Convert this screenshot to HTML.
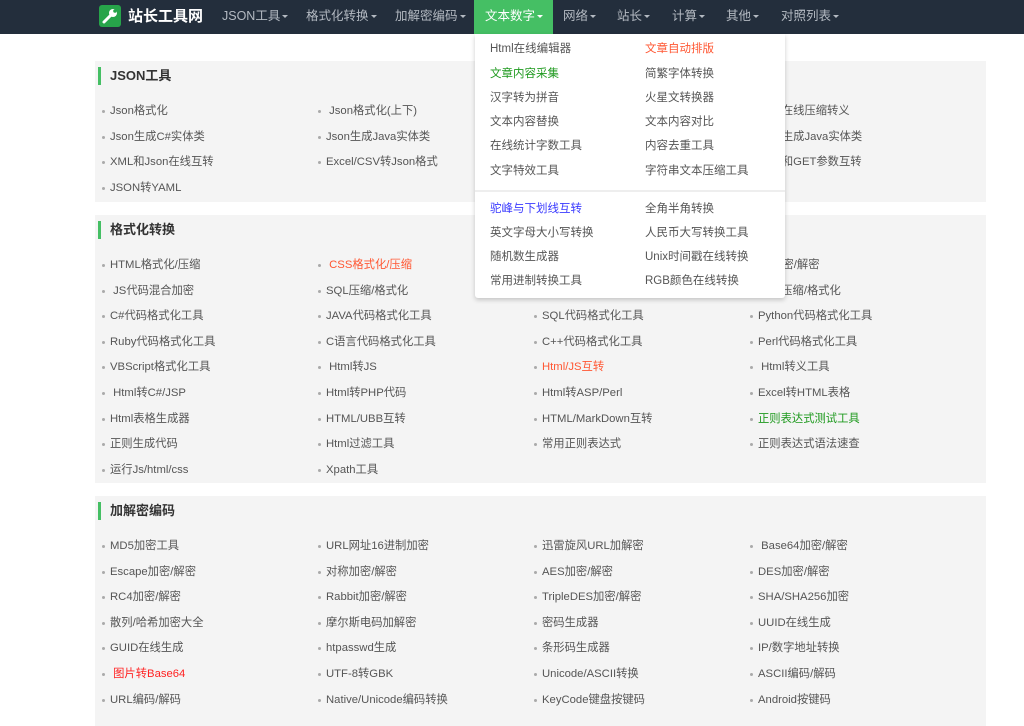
<!DOCTYPE html>
<html><head><meta charset="utf-8"><style>
*{margin:0;padding:0;box-sizing:border-box}
body{width:1024px;height:718px;overflow:hidden;background:#fff;font-family:"Liberation Sans","Noto Sans CJK SC",sans-serif;color:#555;position:relative}
.nav{position:absolute;left:0;top:0;width:1024px;height:34px;background:#232e3c}
.nav span{position:absolute;top:0;line-height:33px;font-size:12.5px;color:#b4bac2}
.caret{display:inline-block;width:0;height:0;border-left:3px solid transparent;border-right:3px solid transparent;border-top:3px solid currentColor;vertical-align:middle;margin-left:2px}
.logo{position:absolute;left:99px;top:5px;width:22px;height:22px;background:#27a44a;border-radius:3px}
.brand{position:absolute;left:128px;top:0;line-height:33px;font-size:15px;font-weight:bold;color:#fff}
.active{position:absolute;left:474px;top:0;width:79px;height:34px;background:#45bf64}
.box{position:absolute;left:95px;width:891px;background:#f4f4f4}
.box h3{position:absolute;left:3px;top:6px;height:18px;border-left:3px solid #45bf64;padding-left:9px;font-size:13px;line-height:18px;color:#333}
.box ul{position:absolute;left:6px;top:38px;width:880px;list-style:none;display:flex;flex-wrap:wrap}
.box li{width:216px;height:25.6px;line-height:25.6px;font-size:11.3px;padding-left:9px;position:relative}
.box li:before{content:"";position:absolute;left:1px;top:11px;width:3px;height:3px;background:#aaa;border-radius:50%}
.r{color:#ff5733}.rr{color:#f22}.g{color:#1f9a1f}.b{color:#3a3aff}
.dd{position:absolute;left:475px;top:34px;width:310px;height:264px;background:#fff;box-shadow:0 2px 5px rgba(0,0,0,.2);border-radius:0 0 3px 3px}
.dd span{position:absolute;font-size:11.5px;line-height:14px;color:#555}
.sep{position:absolute;left:0;top:156px;width:310px;height:2px;background:#eee}
</style></head><body>
<div class="nav">
<div class="logo"><svg width="22" height="22" viewBox="0 0 22 22"><path d="M5 17 L11 11" stroke="#fff" stroke-width="3" stroke-linecap="round"/><circle cx="14" cy="8" r="4" fill="#fff"/><circle cx="16" cy="6" r="1.8" fill="#27a44a"/></svg></div>
<div class="brand">站长工具网</div>
<span style="left:222px">JSON工具<i class="caret"></i></span>
<span style="left:306px">格式化转换<i class="caret"></i></span>
<span style="left:395px">加解密编码<i class="caret"></i></span>
<div class="active"></div>
<span style="left:485px;color:#fff">文本数字<i class="caret"></i></span>
<span style="left:563px">网络<i class="caret"></i></span>
<span style="left:617px">站长<i class="caret"></i></span>
<span style="left:672px">计算<i class="caret"></i></span>
<span style="left:726px">其他<i class="caret"></i></span>
<span style="left:781px">对照列表<i class="caret"></i></span>
</div>

<div class="box" style="top:61px;height:141px"><h3>JSON工具</h3><ul>
<li>Json格式化</li><li>&nbsp;Json格式化(上下)</li><li>Json在线解析</li><li>Json在线压缩转义</li>
<li>Json生成C#实体类</li><li>Json生成Java实体类</li><li>Json生成PHP实体类</li><li>Json生成Java实体类</li>
<li>XML和Json在线互转</li><li>Excel/CSV转Json格式</li><li>Json转Excel</li><li>Json和GET参数互转</li>
<li>JSON转YAML</li></ul></div>

<div class="box" style="top:215px;height:268px"><h3>格式化转换</h3><ul>
<li>HTML格式化/压缩</li><li class="r">&nbsp;CSS格式化/压缩</li><li>JS格式化/压缩</li><li>JS加密/解密</li>
<li>&nbsp;JS代码混合加密</li><li>SQL压缩/格式化</li><li>XML格式化</li><li>PHP压缩/格式化</li>
<li>C#代码格式化工具</li><li>JAVA代码格式化工具</li><li>SQL代码格式化工具</li><li>Python代码格式化工具</li>
<li>Ruby代码格式化工具</li><li>C语言代码格式化工具</li><li>C++代码格式化工具</li><li>Perl代码格式化工具</li>
<li>VBScript格式化工具</li><li>&nbsp;Html转JS</li><li class="r">Html/JS互转</li><li>&nbsp;Html转义工具</li>
<li>&nbsp;Html转C#/JSP</li><li>Html转PHP代码</li><li>Html转ASP/Perl</li><li>Excel转HTML表格</li>
<li>Html表格生成器</li><li>HTML/UBB互转</li><li>HTML/MarkDown互转</li><li class="g">正则表达式测试工具</li>
<li>正则生成代码</li><li>Html过滤工具</li><li>常用正则表达式</li><li>正则表达式语法速查</li>
<li>运行Js/html/css</li><li>Xpath工具</li></ul></div>

<div class="box" style="top:496px;height:230px"><h3>加解密编码</h3><ul>
<li>MD5加密工具</li><li>URL网址16进制加密</li><li>迅雷旋风URL加解密</li><li>&nbsp;Base64加密/解密</li>
<li>Escape加密/解密</li><li>对称加密/解密</li><li>AES加密/解密</li><li>DES加密/解密</li>
<li>RC4加密/解密</li><li>Rabbit加密/解密</li><li>TripleDES加密/解密</li><li>SHA/SHA256加密</li>
<li>散列/哈希加密大全</li><li>摩尔斯电码加解密</li><li>密码生成器</li><li>UUID在线生成</li>
<li>GUID在线生成</li><li>htpasswd生成</li><li>条形码生成器</li><li>IP/数字地址转换</li>
<li class="rr">&nbsp;图片转Base64</li><li>UTF-8转GBK</li><li>Unicode/ASCII转换</li><li>ASCII编码/解码</li>
<li>URL编码/解码</li><li>Native/Unicode编码转换</li><li>KeyCode键盘按键码</li><li>Android按键码</li>
</ul></div>

<div class="dd">
<span style="left:15px;top:8px">Html在线编辑器</span><span style="left:170px;top:8px;color:#ff5733">文章自动排版</span>
<span style="left:15px;top:33px;color:#1f9a1f">文章内容采集</span><span style="left:170px;top:33px">简繁字体转换</span>
<span style="left:15px;top:57px">汉字转为拼音</span><span style="left:170px;top:57px">火星文转换器</span>
<span style="left:15px;top:81px">文本内容替换</span><span style="left:170px;top:81px">文本内容对比</span>
<span style="left:15px;top:105px">在线统计字数工具</span><span style="left:170px;top:105px">内容去重工具</span>
<span style="left:15px;top:130px">文字特效工具</span><span style="left:170px;top:130px">字符串文本压缩工具</span>
<div class="sep"></div>
<span style="left:15px;top:168px;color:#3a3aff">驼峰与下划线互转</span><span style="left:170px;top:168px">全角半角转换</span>
<span style="left:15px;top:192px">英文字母大小写转换</span><span style="left:170px;top:192px">人民币大写转换工具</span>
<span style="left:15px;top:216px">随机数生成器</span><span style="left:170px;top:216px">Unix时间戳在线转换</span>
<span style="left:15px;top:240px">常用进制转换工具</span><span style="left:170px;top:240px">RGB颜色在线转换</span>
</div>
</body></html>
